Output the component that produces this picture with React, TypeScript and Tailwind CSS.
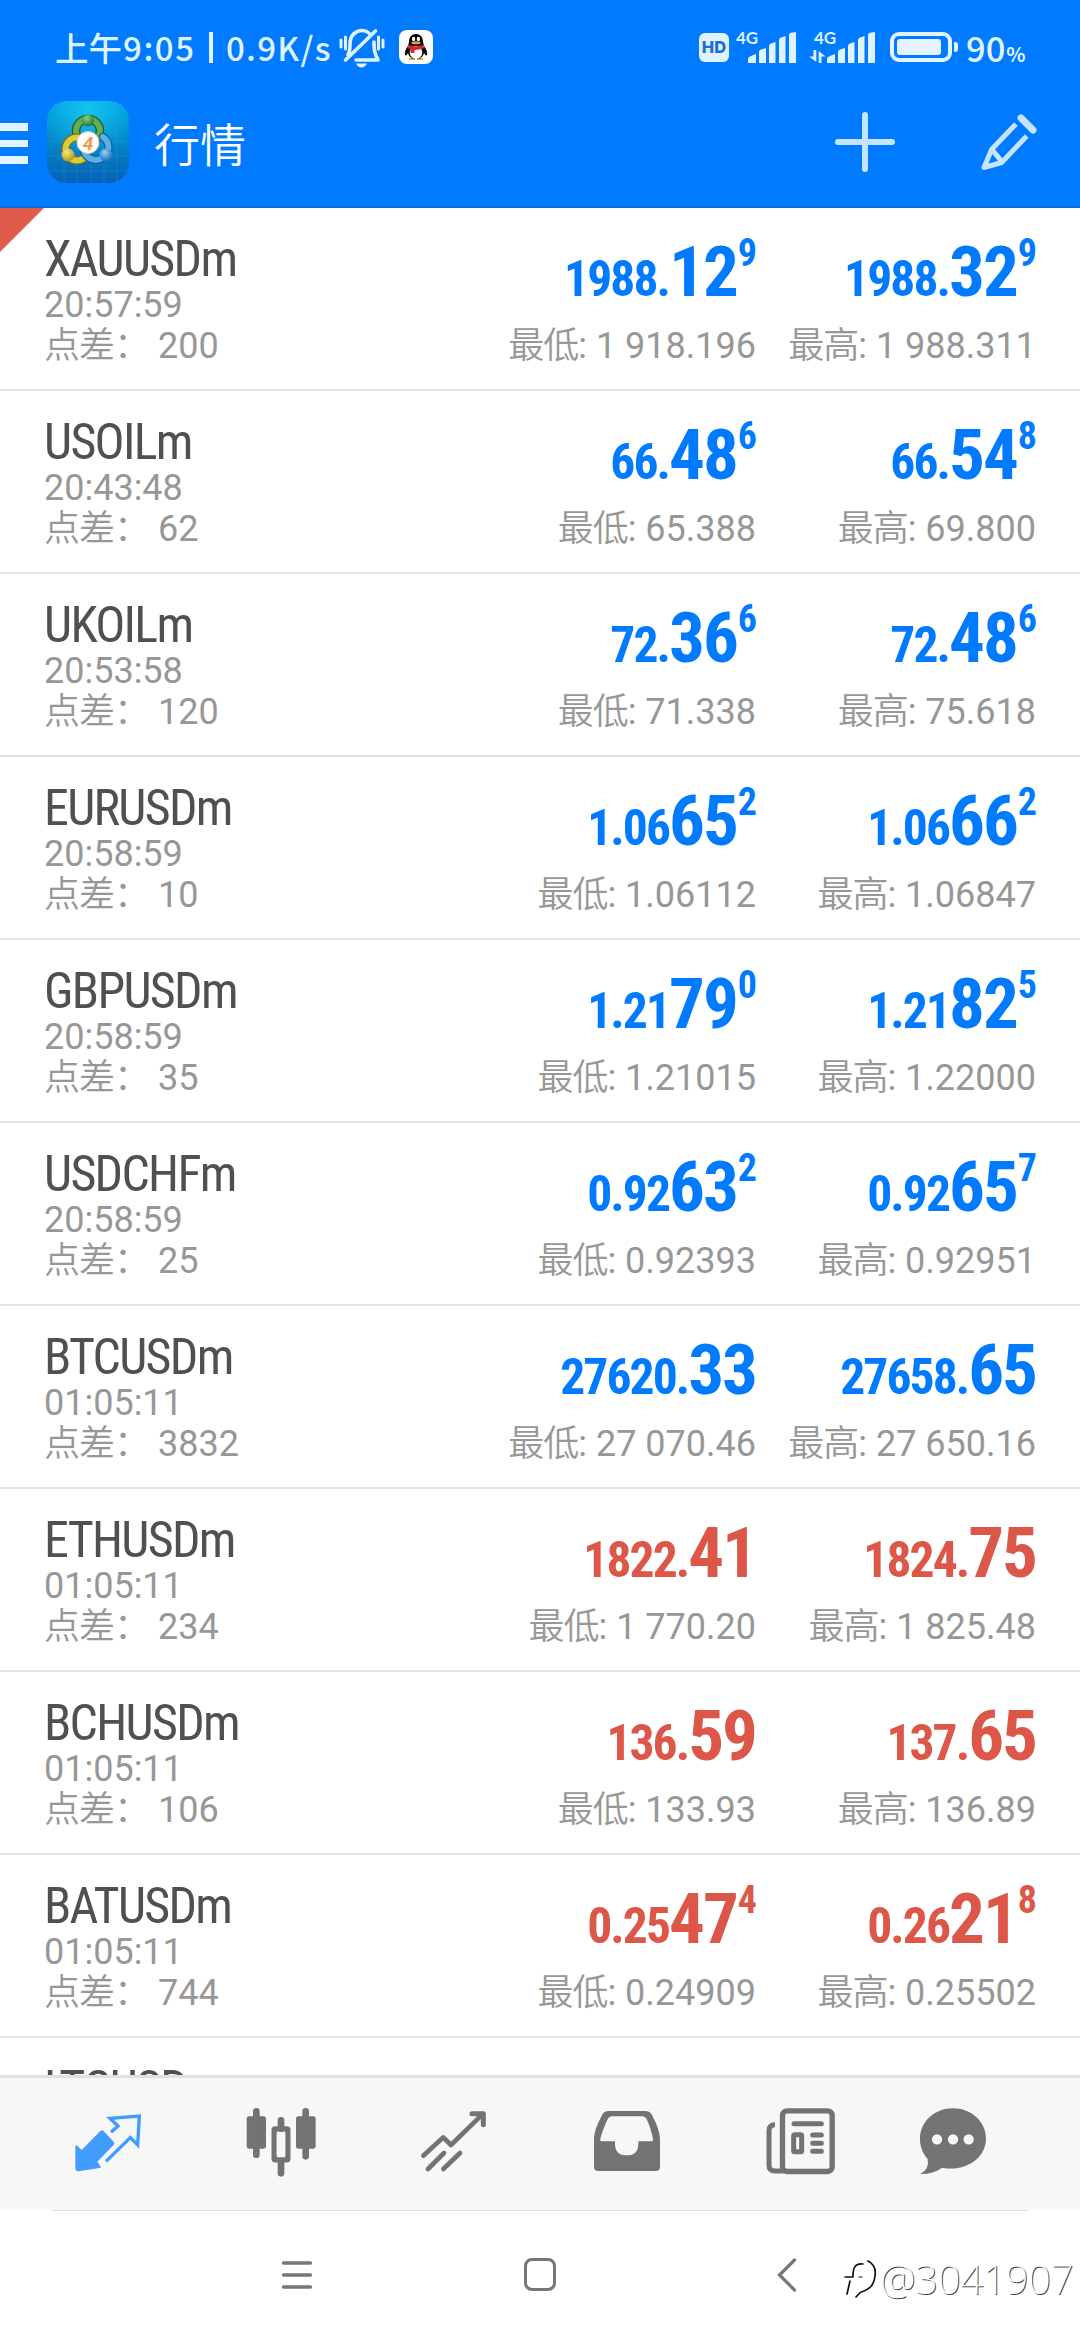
interface Quote {
  symbol: string;
  time: string;
  spread: string;
  bid: [string, string, string?];
  ask: [string, string, string?];
  low: string;
  high: string;
  down?: boolean;
}

const QUOTES: Quote[] = [
  { symbol: "XAUUSDm", time: "20:57:59", spread: "200", bid: ["1988.", "12", "9"], ask: ["1988.", "32", "9"], low: "1 918.196", high: "1 988.311" },
  { symbol: "USOILm", time: "20:43:48", spread: "62", bid: ["66.", "48", "6"], ask: ["66.", "54", "8"], low: "65.388", high: "69.800" },
  { symbol: "UKOILm", time: "20:53:58", spread: "120", bid: ["72.", "36", "6"], ask: ["72.", "48", "6"], low: "71.338", high: "75.618" },
  { symbol: "EURUSDm", time: "20:58:59", spread: "10", bid: ["1.06", "65", "2"], ask: ["1.06", "66", "2"], low: "1.06112", high: "1.06847" },
  { symbol: "GBPUSDm", time: "20:58:59", spread: "35", bid: ["1.21", "79", "0"], ask: ["1.21", "82", "5"], low: "1.21015", high: "1.22000" },
  { symbol: "USDCHFm", time: "20:58:59", spread: "25", bid: ["0.92", "63", "2"], ask: ["0.92", "65", "7"], low: "0.92393", high: "0.92951" },
  { symbol: "BTCUSDm", time: "01:05:11", spread: "3832", bid: ["27620.", "33"], ask: ["27658.", "65"], low: "27 070.46", high: "27 650.16" },
  { symbol: "ETHUSDm", time: "01:05:11", spread: "234", bid: ["1822.", "41"], ask: ["1824.", "75"], low: "1 770.20", high: "1 825.48", down: true },
  { symbol: "BCHUSDm", time: "01:05:11", spread: "106", bid: ["136.", "59"], ask: ["137.", "65"], low: "133.93", high: "136.89", down: true },
  { symbol: "BATUSDm", time: "01:05:11", spread: "744", bid: ["0.25", "47", "4"], ask: ["0.26", "21", "8"], low: "0.24909", high: "0.25502", down: true },
];

function SignalBars() {
  return (
    <svg width="49" height="31" viewBox="0 0 49 31" fill="#dff3ff">
      <path d="M0 31v-4q0-2 3-3l5-2v9zM11 31V20q0-2 2-2.500l5-1.500v15zM21 31V14q0-2 2-2.500l4.500-1.500v21zM31 31V8q0-2 2-2.500l4.500-1.500v27zM41 31V3q0-2 2-2.300L48 0v31z" />
    </svg>
  );
}

function StatusBar() {
  return (
    <div className="flex h-[94px] items-center pl-[55px] font-['Noto_Sans_CJK_SC',sans-serif] text-[33px] font-medium leading-none text-[#dff3ff]">
      <span className="w-[68px] text-[33.500px]">上午</span>
      <span className="w-[86px] tracking-[1.600px]">9:05</span>
      <span className="h-[31px] w-[4px] bg-[#dff3ff]" />
      <span className="ml-[13px] w-[113px] tracking-[1.300px]">0.9K/s</span>
      <svg className="mt-[2px]" width="46" height="40" viewBox="0 0 46 40" fill="none" stroke="#dff3ff" strokeWidth="3.600" strokeLinecap="round" strokeLinejoin="round">
        <path d="M6.500 32 36.500 3" />
        <path d="M9 27c2-3 2-6 2-11C11 7 17 2.500 23 2.500c3 0 5 .8 7 2.500M35 14c0 7 0 10 4 18H17" />
        <path d="M2 12v7M6.500 9v12M44 12v7M39.500 9v12" strokeWidth="3" />
        <path d="M17 35.500h11q-2 4-5.500 4t-5.500-4z" fill="#dff3ff" stroke="none" />
      </svg>
      <svg className="ml-[14px]" width="34" height="34" viewBox="0 0 34 34">
        <rect width="34" height="34" rx="8" fill="#fff" />
        <path d="M10 30h6v-2h-6zM18 30h6v-2h-6z" fill="#f0a030" />
        <path d="M10 12c0-5 2.500-8 7-8s7 3 7 8l1 4c2 3 4 6 3 9-1 1-2 0-3-2-1 4-4 6-8 6s-7-2-8-6c-1 2-2 3-3 2-1-3 1-6 3-9z" fill="#0a0a0a" />
        <ellipse cx="17" cy="22.500" rx="6.300" ry="6.500" fill="#fff" />
        <ellipse cx="14.600" cy="9" rx="1.600" ry="2.200" fill="#fff" />
        <ellipse cx="19.400" cy="9" rx="1.600" ry="2.200" fill="#fff" />
        <ellipse cx="17" cy="12.800" rx="4.500" ry="1.500" fill="#f0a030" />
        <path d="M9 14.500q8 4 16 0l.5 3.500q-5 2-10 2v3h-4v-4l-3-1z" fill="#d8262c" />
      </svg>
      <span className="ml-[266px] flex h-[29px] w-[30px] items-center justify-center rounded-[6px] bg-[#dff3ff] font-['Inter',sans-serif] text-[16.500px] font-extrabold text-[#1670d8]">HD</span>
      <div className="relative ml-[19px] flex h-[31px]">
        <span className="absolute -left-[12px] -top-[2px] font-['Lato',sans-serif] text-[17px] font-bold leading-[16px]">4G</span>
        <SignalBars />
      </div>
      <svg className="ml-[12px] mt-[18px]" width="17" height="13" viewBox="0 0 17 13" fill="#dff3ff">
        <path d="M4.500 0h2.800v12L0 6.500h4.500zM9.700 13V1l6.800 5.500h-4V13z" />
      </svg>
      <div className="relative ml-[1px] flex h-[31px]">
        <span className="absolute -left-[13px] -top-[2px] font-['Lato',sans-serif] text-[17px] font-bold leading-[16px]">4G</span>
        <SignalBars />
      </div>
      <div className="ml-[14px] h-[30px] w-[62px] rounded-[9px] border-[4px] border-[#dff3ff] p-[3px]">
        <div className="h-[16px] w-[44px] rounded-[3px] bg-[#e6f1ff]" />
      </div>
      <span className="ml-[2px] h-[10px] w-[4px] rounded-r-[3px] bg-[#dff3ff]" />
      <span className="ml-[8px] flex items-baseline text-[34.500px]">
        90<span className="ml-[1px] text-[20px] font-bold">%</span>
      </span>
    </div>
  );
}

function AppLogo() {
  return (
    <svg className="ml-[19px]" width="82" height="82" viewBox="0 0 82 82">
      <defs>
        <linearGradient id="tile" x1="0" y1="0" x2="0" y2="1">
          <stop offset="0" stopColor="#00a0e4" />
          <stop offset=".5" stopColor="#0584c8" />
          <stop offset="1" stopColor="#0562b4" />
        </linearGradient>
        <radialGradient id="glow" cx=".5" cy=".1" r=".6">
          <stop offset="0" stopColor="#12c4ee" />
          <stop offset="1" stopColor="#12c4ee" stopOpacity="0" />
        </radialGradient>
        <radialGradient id="green" cx=".4" cy=".3" r=".7">
          <stop offset="0" stopColor="#8fd07a" />
          <stop offset="1" stopColor="#1d7a2c" />
        </radialGradient>
        <radialGradient id="yellow" cx=".4" cy=".3" r=".7">
          <stop offset="0" stopColor="#f6ea80" />
          <stop offset="1" stopColor="#b09a18" />
        </radialGradient>
        <radialGradient id="blue" cx=".4" cy=".3" r=".7">
          <stop offset="0" stopColor="#8fd0f5" />
          <stop offset="1" stopColor="#1f70b8" />
        </radialGradient>
      </defs>
      <rect width="82" height="82" rx="20" fill="url(#tile)" />
      <rect width="82" height="82" rx="20" fill="url(#glow)" />
      <path d="M0 27h82M0 41h82M0 55h82M0 70h82M17 0v82M30 0v82M44 0v82M57 0v82M70 0v82" stroke="#3fb4e6" strokeOpacity=".2" />
      <g fill="none" strokeLinecap="round">
        <circle cx="41" cy="30" r="12" stroke="#1f5a35" strokeWidth="8.500" />
        <circle cx="41" cy="30" r="12" stroke="#62b04c" strokeWidth="6" />
        <circle cx="30" cy="48" r="11.500" stroke="#6a6e1c" strokeWidth="8.500" />
        <circle cx="30" cy="48" r="11.500" stroke="#d9cc3c" strokeWidth="6" />
        <path d="M56 36a12.500 12.500 0 1 1-19 14" stroke="#165a94" strokeWidth="8.500" />
        <path d="M56 36a12.500 12.500 0 1 1-19 14" stroke="#58aee6" strokeWidth="6" />
      </g>
      <circle cx="41" cy="19.500" r="6" fill="url(#green)" />
      <circle cx="21" cy="54" r="6.500" fill="url(#yellow)" />
      <circle cx="59" cy="54" r="6.500" fill="url(#blue)" />
      <circle cx="41" cy="41.500" r="11" fill="#fff" stroke="#d7c8b4" />
      <text x="41" y="48.500" textAnchor="middle" fontFamily="Roboto" fontSize="19" fontStyle="italic" fontWeight="700" fill="#f09a50">4</text>
    </svg>
  );
}

function Toolbar() {
  return (
    <div className="flex h-[114px] items-center pb-[18px]">
      <div className="flex w-[28px] flex-col gap-[9px] pt-[3px]">
        <span className="h-[7.500px] bg-[#e2f4ff]" />
        <span className="h-[7.500px] bg-[#e2f4ff]" />
        <span className="h-[7.500px] bg-[#e2f4ff]" />
      </div>
      <AppLogo />
      <h1 className="ml-[25px] font-['Noto_Sans_CJK_SC',sans-serif] text-[46px] font-[350] leading-none text-white">行情</h1>
      <svg className="ml-auto" width="60" height="60" viewBox="0 0 60 60" stroke="#c4e4ff" strokeWidth="6" strokeLinecap="round">
        <path d="M30 3v54M3 30h54" />
      </svg>
      <svg className="ml-[85px] mr-[42px]" width="58" height="58" viewBox="0 0 58 58" fill="none" stroke="#c4e4ff" strokeWidth="5" strokeLinejoin="round">
        <path d="M36 11 11.700 36.300 4 54.500 21.700 49.500 46.700 23" />
        <path d="m11.700 36.300 10 12" />
        <path d="m41 5 12 12" strokeWidth="7" strokeLinecap="round" />
      </svg>
    </div>
  );
}

function Price({ parts, label, extreme, down }: { parts: [string, string, string?]; label: string; extreme: string; down?: boolean }) {
  const [lead, big, pip] = parts;
  return (
    <div className="w-[280px] whitespace-nowrap pt-[34px] text-right">
      <p className={`font-['Roboto_Condensed',sans-serif] text-[71px] font-bold leading-[60px] tracking-[-2px] ${down ? "text-[#dc5748]" : "text-[#007aff]"}`}>
        <span className="text-[49.500px] leading-[0] tracking-[-1.900px]">{lead}</span>
        {big}
        {pip && <span className="ml-[1px] align-[30px] text-[38px] leading-[0] tracking-[-1px]">{pip}</span>}
      </p>
      <p className="mt-[24px]">
        <span className="font-[350] tracking-[-1px]">{label}</span>: {extreme}
      </p>
    </div>
  );
}

function QuoteRow({ quote }: { quote: Quote }) {
  return (
    <li className="flex h-[183px] border-b-2 border-[#e3e3e3] pl-[44px] pr-[44px] text-[36px] leading-[41px] text-[#979797]">
      <div className="mr-auto pt-[26px]">
        <p className="font-['Roboto_Condensed',sans-serif] text-[50px] leading-[51px] tracking-[-1.700px] text-[#505050]">{quote.symbol}</p>
        <p>{quote.time}</p>
        <p>
          <span className="font-[350] tracking-[-1px]">点差：</span> {quote.spread}
        </p>
      </div>
      <Price parts={quote.bid} label="最低" extreme={quote.low} down={quote.down} />
      <Price parts={quote.ask} label="最高" extreme={quote.high} down={quote.down} />
    </li>
  );
}

function TabBar() {
  return (
    <nav className="flex h-[135px] shrink-0 gap-[103px] border-t-[3px] border-[#e0e0e0] bg-[#f7f7f7] pl-[73px] pt-[29px] text-[#737373]">
      <svg width="70" height="70" viewBox="70 50 210 210" fill="#419cff">
        <path d="M77 170q0-8 6-3l13 12 56-57q5-4 10 0l30 32q4 5 0 10l-49 50 9 13q3 6-3 6l-62 10q-10 1-10-9z" />
        <path d="m184 126 21-19-24-23 88-7-5 87-22-22-73 71" fill="none" stroke="#419cff" strokeWidth="10" />
      </svg>
      <svg width="70" height="70" viewBox="588 50 210 210" fill="currentColor">
        <rect x="590" y="78" width="58" height="97" rx="7" />
        <rect x="738" y="78" width="59" height="97" rx="7" />
        <path d="M619 63v130M767 63v135M693 90v25M693 215v34" stroke="currentColor" strokeWidth="20" strokeLinecap="round" />
        <rect x="672.500" y="115.500" width="41" height="93" rx="3" fill="none" stroke="currentColor" strokeWidth="16" />
        <rect x="680" y="125" width="26" height="75" rx="6" fill="#f7f7f7" />
      </svg>
      <svg width="70" height="70" viewBox="1109 50 210 210" fill="none" stroke="currentColor" strokeWidth="14" strokeLinecap="round" strokeLinejoin="round">
        <path d="m1122 196 60-55 23 23 94-92" />
        <path d="M1268 70h34v33" strokeWidth="15" />
        <path d="m1136 236 48-48M1182 236l50-48" />
      </svg>
      <svg width="70" height="70" viewBox="38 50 210 210">
        <path fill="currentColor" fillRule="evenodd" d="M88 62h110q14 0 20 12c14 28 24 50 24 75v80q0 13-13 13H57q-13 0-13-13v-80c0-25 10-47 24-75q6-12 20-12zM99 78q-10 0-14 9c-8 16-16 36-22 58q-2 8 6 8h38v7q0 35 35 35t35-35v-7h38q8 0 6-8c-5-22-11-42-19-58q-4-9-14-9z" />
      </svg>
      <svg width="70" height="70" viewBox="557 50 210 210" fill="none" stroke="currentColor" strokeWidth="15" strokeLinecap="round">
        <rect x="609.500" y="61.500" width="149" height="182" rx="14" strokeWidth="16" />
        <path d="M587 103q-18 0-18 18v103q0 18 18 18h30" strokeLinecap="butt" />
        <path d="M644 100h82M700 134h26M700 158.500h26M700 183h26" />
        <rect x="643" y="133" width="24" height="51" rx="3" />
      </svg>
      <svg className="-ml-[21px]" width="70" height="70" viewBox="1011 50 210 210">
        <path d="M1119 54c56 0 99 41 99 91 0 58-62 101-131 87q-30 20-66 19 28-14 22-45c-14-16-23-36-23-61 0-50 43-91 99-91z" fill="currentColor" />
        <path d="M1071 147h.1M1119 147h.1M1166 147h.1" stroke="#f7f7f7" strokeWidth="31" strokeLinecap="round" />
      </svg>
    </nav>
  );
}

function SystemNav() {
  return (
    <div className="relative flex h-[130px] shrink-0 bg-white px-[52px]">
      <div className="flex w-full items-start border-t border-[#dedede] pt-[47px]">
        <svg className="ml-[229px]" width="32" height="34" viewBox="0 0 32 34" stroke="#777" strokeWidth="3.300" strokeLinecap="round">
          <path d="M2.500 5h27M2.500 17h27M2.500 29h27" />
        </svg>
        <span className="ml-[211px] h-[33px] w-[32px] rounded-[8px] border-[3px] border-[#777]" />
        <svg className="ml-[221px]" width="20" height="34" viewBox="0 0 20 34" fill="none" stroke="#777" strokeWidth="3.200" strokeLinecap="round">
          <path d="M17.500 2 2.500 17l15 15" />
        </svg>
      </div>
      {/* user tag overlapping the system bar */}
      <div className="absolute left-[844px] top-[44px] flex items-center font-['Noto_Sans',sans-serif] text-[40px] font-extralight leading-[50px] tracking-[-0.200px] text-white [text-shadow:1px_1px_0_#444]">
        <svg className="mr-[2px]" width="34" height="44" viewBox="0 0 34 44" fill="none" stroke="#111" strokeWidth="1.700" strokeLinecap="round">
          <path d="M19 7c-8-1-10 4-10 12M1 20h8M6 24 3 37M24 4c6 3 8 9 7 15-1 9-5 13-11 15-5 1-6 4-8 6" />
          <path d="M15 20h3" strokeWidth="1" />
        </svg>
        @3041907
      </div>
    </div>
  );
}

export default function App() {
  return (
    <main className="flex h-[2340px] w-[1080px] flex-col overflow-hidden bg-white font-['Roboto','Noto_Sans_CJK_SC',sans-serif]">
      <header className="h-[208px] shrink-0 border-b-2 border-[#0a6cd8] bg-[#007aff]">
        <StatusBar />
        <Toolbar />
      </header>
      <ul className="relative min-h-0 flex-1 overflow-hidden">
        <span className="absolute left-0 top-0 size-[44px] bg-[#e05a4b] [clip-path:polygon(0_0,100%_0,0_100%)]" />
        {QUOTES.map((quote) => (
          <QuoteRow key={quote.symbol} quote={quote} />
        ))}
        <li className="pl-[44px] pt-[26px] font-['Roboto_Condensed',sans-serif] text-[50px] leading-[50px] tracking-[-1.700px] text-[#505050]">LTCUSDm</li>
      </ul>
      <TabBar />
      <SystemNav />
    </main>
  );
}
